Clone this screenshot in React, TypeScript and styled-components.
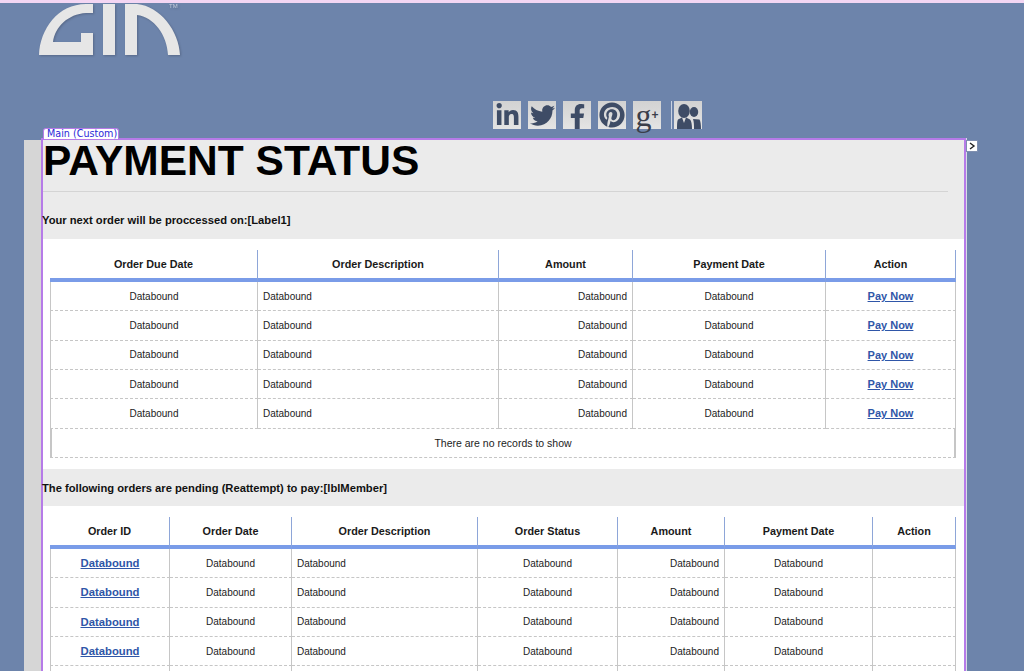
import React from 'react';
import styled, { createGlobalStyle } from 'styled-components';
import { FaLinkedinIn, FaTwitter, FaFacebookF, FaPinterest } from 'react-icons/fa';

const GlobalStyle = createGlobalStyle`
  html, body {
    margin: 0;
    padding: 0;
    background: #6d84ab;
    font-family: "Liberation Sans", Arial, sans-serif;
    color: #111;
    overflow: hidden;
  }
`;

const Page = styled.div`
  height: 671px;
  overflow: hidden;
  border-top: 3px solid #f3d6f3;
`;

const Masthead = styled.header`
  height: 135px;
  padding-left: 38px;
  box-sizing: border-box;
`;

const Logo = styled.svg`
  display: block;
  width: 150px;
  height: 56px;
  filter: drop-shadow(1px 1px 1px rgba(60, 72, 96, 0.45));
`;

const Socials = styled.div`
  display: flex;
  align-items: flex-start;
  gap: 7px;
  margin: 42px 0 0 455px;
`;

const Tile = styled.span<{ $divided?: boolean; $size?: number; $align?: string }>`
  width: 28px;
  height: 28px;
  display: flex;
  align-items: ${(p) => p.$align || 'center'};
  justify-content: center;
  background: linear-gradient(#d2d2d2, #e4e4e4);
  color: #3e4c66;
  font-size: ${(p) => p.$size || 22}px;
  margin-left: ${(p) => (p.$divided ? '6px' : '0')};
  box-shadow: ${(p) => (p.$divided ? '-2px 0 0 #6d84ab, -3px 0 0 #c9d2e2' : 'none')};
`;

const GoogleG = styled.span`
  font-family: "Liberation Serif", serif;
  font-size: 32px;
  line-height: 20px;
  color: #3a3f4a;
`;

const GooglePlus = styled.span`
  font-size: 12px;
  font-weight: 700;
  line-height: 20px;
  color: #3a3f4a;
`;

const Stage = styled.div`
  display: flex;
  padding-left: 24px;
  align-items: flex-start;
`;

const Gutter = styled.div`
  width: 17px;
  height: 540px;
  margin-top: 2px;
  background: #d6d6d6;
`;

const MainFrame = styled.main`
  position: relative;
  width: 925px;
  box-sizing: border-box;
  border: solid #b67be8;
  border-width: 2px 2px 0;
  background: #fff;
  box-shadow: 1px 0 0 #d8dde8;
`;

const FrameTag = styled.span`
  position: absolute;
  left: 0;
  top: -12px;
  height: 10px;
  line-height: 10px;
  padding: 0 1px 0 3px;
  background: #fff;
  border: 1px solid #b67be8;
  border-bottom: 0;
  border-radius: 3px 3px 0 0;
  color: #2a2ad8;
  font-family: "DejaVu Sans", sans-serif;
  font-size: 9.6px;
`;

const ExpandHandle = styled.span`
  position: absolute;
  left: 923px;
  top: 0;
  width: 12px;
  height: 12px;
  background: #fff;
  border: 1px solid #7f8fb0;
  box-sizing: border-box;
  display: flex;
  align-items: center;
  justify-content: center;
`;

const TitleBlock = styled.section`
  background: #ebebeb;
  height: 99px;
  box-sizing: border-box;
`;

const Title = styled.h1`
  margin: 0;
  height: 51px;
  line-height: 42px;
  font-size: 42.5px;
  font-weight: 700;
  color: #000;
`;

const Rule = styled.hr`
  margin: 0 16px 0 0;
  border: 0;
  height: 1px;
  background: #d4d4d4;
`;

const Label = styled.p`
  margin: 1px 0 0 -1px;
  font-size: 11.2px;
  font-weight: 700;
  color: #111;
`;

const TitleLabel = styled(Label)`
  margin-top: 22px;
`;

const Band = styled.section`
  background: #ebebeb;
  height: 37px;
  margin-top: 11px;
  display: flex;
  align-items: center;
`;

const TableWrap = styled.div`
  padding: 11px 8px 0 7px;
`;

const Table = styled.table`
  width: 906px;
  table-layout: fixed;
  border-collapse: separate;
  border-spacing: 0;
  font-size: 10px;
`;

const Th = styled.th<{ $w: number }>`
  width: ${(p) => p.$w}px;
  box-sizing: border-box;
  padding: 0;
  font-size: 10.8px;
  font-weight: 700;
  color: #1a1a1a;
  text-align: center;
  border-right: 1px solid #8ea6d8;
  border-bottom: 4px solid #7a9ce8;
  height: 32px;
`;

const Td = styled.td<{ $align?: string }>`
  height: 29.33px;
  box-sizing: border-box;
  padding: 0 5px;
  text-align: ${(p) => p.$align || 'center'};
  color: #1c1c1c;
  border-right: 1px solid #c6c6c6;
  border-bottom: 1px dashed #c6c6c6;
  &:first-child {
    border-left: 1px solid #c6c6c6;
  }
`;

const EmptyRow = styled(Td)`
  font-size: 10.5px;
  border-left: 2px solid #c6c6c6;
  border-right: 2px solid #c6c6c6;
  &:first-child {
    border-left: 2px solid #c6c6c6;
  }
`;

const DataLink = styled.a<{ $size: number }>`
  color: #2f56a8;
  font-size: ${(p) => p.$size}px;
  font-weight: 700;
  text-decoration: underline;
`;

type Column = { title: string; width: number; align?: string };

const paymentColumns: Column[] = [
  { title: 'Order Due Date', width: 208 },
  { title: 'Order Description', width: 241, align: 'left' },
  { title: 'Amount', width: 134, align: 'right' },
  { title: 'Payment Date', width: 193 },
  { title: 'Action', width: 130 },
];

const pendingColumns: Column[] = [
  { title: 'Order ID', width: 120 },
  { title: 'Order Date', width: 122 },
  { title: 'Order Description', width: 186, align: 'left' },
  { title: 'Order Status', width: 140 },
  { title: 'Amount', width: 107, align: 'right' },
  { title: 'Payment Date', width: 148 },
  { title: 'Action', width: 83 },
];

const paymentRows = [0, 1, 2, 3, 4];
const pendingRows = [0, 1, 2, 3];

const LogoMark = () => (
  <Logo viewBox="0 0 150 56" aria-hidden="true">
    <g fill="#e6e6e6">
      <path d="M1 52 C2 26 20 1 48 1 H55 V10 H48 C30 11 17 24 15 39 H43 V30 H55 V52 Z" />
      <path d="M65 1 H77 V52 H65 Z" />
      <path d="M87 1 H99 C122 3 141 28 142 52 H130 C129 32 116 14 99 12 V52 H87 Z" />
    </g>
    <text x="131" y="5" fontSize="6" fill="#c3ccdb" fontFamily="Liberation Sans, sans-serif">
      TM
    </text>
  </Logo>
);

const PeopleIcon = () => (
  <svg width="28" height="28" viewBox="0 0 28 28" aria-hidden="true">
    <g fill="#3e4c66">
      <ellipse cx="20" cy="11" rx="4.2" ry="5" />
      <path d="M19 18 L25.5 18.5 C26.5 20 27 24 27 28 H20 C20 24 20 21 19 18 Z" />
      <ellipse cx="10" cy="10" rx="5.8" ry="7" />
      <path d="M3 28 C3 24 3 20 4 18.5 L8 16.5 L10 22 L12 16.5 L16 18.5 C17.5 20 18 24 18 28 Z" />
    </g>
  </svg>
);

const App: React.FC = () => {
  return (
    <Page>
      <GlobalStyle />
      <Masthead>
        <LogoMark />
        <Socials>
          <Tile $size={25}>
            <FaLinkedinIn />
          </Tile>
          <Tile $size={25}>
            <FaTwitter />
          </Tile>
          <Tile $size={25} $align="flex-end">
            <FaFacebookF />
          </Tile>
          <Tile $size={26}>
            <FaPinterest />
          </Tile>
          <Tile>
            <GoogleG>g</GoogleG>
            <GooglePlus>+</GooglePlus>
          </Tile>
          <Tile $divided>
            <PeopleIcon />
          </Tile>
        </Socials>
      </Masthead>
      <Stage>
        <Gutter />
        <MainFrame>
          <FrameTag>Main (Custom)</FrameTag>
          <ExpandHandle>
            <svg width="8" height="8" viewBox="0 0 8 8" aria-hidden="true">
              <path d="M2 1 L6 4 L2 7" fill="none" stroke="#222" strokeWidth="1.4" />
            </svg>
          </ExpandHandle>
          <TitleBlock>
            <Title>PAYMENT STATUS</Title>
            <Rule />
            <TitleLabel>Your next order will be proccessed on:[Label1]</TitleLabel>
          </TitleBlock>
          <TableWrap>
            <Table>
              <thead>
                <tr>
                  {paymentColumns.map((c) => (
                    <Th key={c.title} $w={c.width}>
                      {c.title}
                    </Th>
                  ))}
                </tr>
              </thead>
              <tbody>
                {paymentRows.map((r) => (
                  <tr key={r}>
                    {paymentColumns.map((c) => (
                      <Td key={c.title} $align={c.align}>
                        {c.title === 'Action' ? (
                          <DataLink href="#" $size={11}>
                            Pay Now
                          </DataLink>
                        ) : (
                          'Databound'
                        )}
                      </Td>
                    ))}
                  </tr>
                ))}
                <tr>
                  <EmptyRow colSpan={5}>There are no records to show</EmptyRow>
                </tr>
              </tbody>
            </Table>
          </TableWrap>
          <Band>
            <Label>The following orders are pending (Reattempt) to pay:[lblMember]</Label>
          </Band>
          <TableWrap>
            <Table>
              <thead>
                <tr>
                  {pendingColumns.map((c) => (
                    <Th key={c.title} $w={c.width}>
                      {c.title}
                    </Th>
                  ))}
                </tr>
              </thead>
              <tbody>
                {pendingRows.map((r) => (
                  <tr key={r}>
                    {pendingColumns.map((c) => (
                      <Td key={c.title} $align={c.align}>
                        {c.title === 'Order ID' ? (
                          <DataLink href="#" $size={11.3}>
                            Databound
                          </DataLink>
                        ) : c.title === 'Action' ? (
                          ''
                        ) : (
                          'Databound'
                        )}
                      </Td>
                    ))}
                  </tr>
                ))}
                <tr>
                  {pendingColumns.map((c) => (
                    <Td key={c.title} />
                  ))}
                </tr>
              </tbody>
            </Table>
          </TableWrap>
        </MainFrame>
      </Stage>
    </Page>
  );
};

export default App;
